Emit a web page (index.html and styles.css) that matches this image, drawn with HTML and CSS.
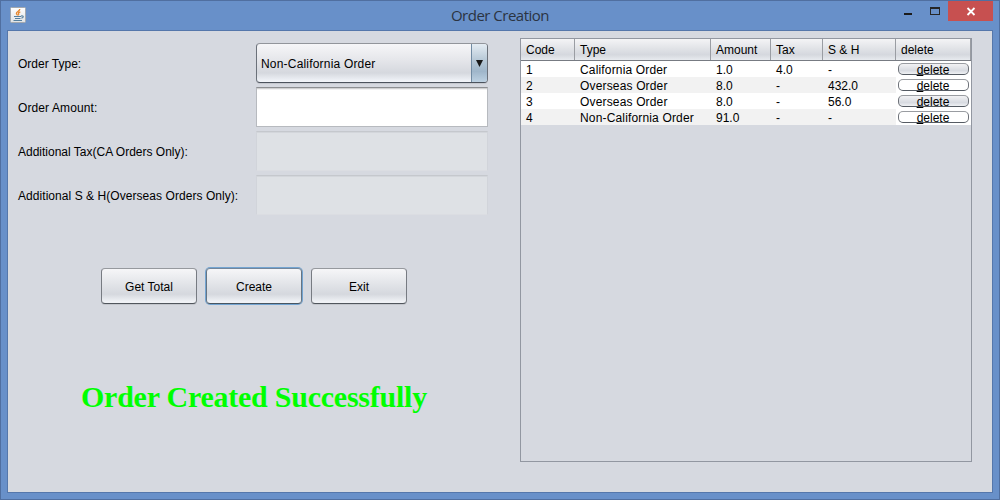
FILE: index.html
```html
<!DOCTYPE html>
<html lang="en">
<head>
<meta charset="utf-8">
<title>Order Creation</title>
<link rel="stylesheet" href="styles.css">
</head>
<body>
<div class="window">
  <header class="titlebar">
    <svg class="java" width="16" height="16" viewBox="0 0 16 16">
      <defs><linearGradient id="tile" x1="0" y1="0" x2="0" y2="1"><stop offset="0" stop-color="#fff"/><stop offset="1" stop-color="#dfe2e5"/></linearGradient></defs>
      <rect x=".5" y=".5" width="15" height="15" rx="1" fill="url(#tile)" stroke="#a3a8ae"/>
      <path d="M9.8 2C10 4 6.200 4.800 6.400 6.300C6.500 7.200 7.400 7.500 7.500 8.500M10.300 4.800C8.500 5.400 8 6 8.700 6.900C9 7.500 8.600 7.900 8.200 8.300" fill="none" stroke="#e8882e" stroke-width="1.300"/>
      <path d="M4 9.500H11M5 11.500H10.500M3.500 13.500H12M11 9C14.200 8.300 13.700 10.900 11.400 11.100" fill="none" stroke="#56809f" stroke-width="1.100"/>
    </svg>
    <h1 class="title">Order Creation</h1>
    <div class="controls">
      <svg class="glyphs" width="60" height="21" viewBox="0 0 60 21"><path d="M16 12h8v2h-8z" fill="#1b1b1b"/><path d="M42 6h10v8h-10zM43 8v5h8v-5z" fill="#262626" fill-rule="evenodd"/></svg>
      <div class="close"><svg width="45" height="20" viewBox="0 0 45 20"><path d="M19.500 7l7 7M26.500 7l-7 7" stroke="#fff" stroke-width="1.800"/></svg></div>
    </div>
  </header>
  <main class="content">
    <section class="left">
      <div class="form">
        <span class="label l1">Order Type:</span>
        <div class="combo"><span class="value">Non-California Order</span><span class="arrow"><svg width="7" height="7" viewBox="0 0 7 7"><path d="M0 0h7L3.500 7z" fill="#191919"/></svg></span></div>
        <span class="label l2">Order Amount:</span>
        <div class="field"></div>
        <span class="label l3">Additional Tax(CA Orders Only):</span>
        <div class="field disabled"></div>
        <span class="label l4">Additional S &amp; H(Overseas Orders Only):</span>
        <div class="field disabled"></div>
      </div>
      <div class="buttons">
        <div class="button">Get Total</div>
        <div class="button focused">Create</div>
        <div class="button">Exit</div>
      </div>
      <p class="message">Order Created Successfully</p>
    </section>
    <section class="table">
      <div class="row head"><span>Code</span><span>Type</span><span>Amount</span><span>Tax</span><span>S &amp; H</span><span>delete</span></div>
      <div class="row"><span>1</span><span class="type">California Order</span><span>1.0</span><span>4.0</span><span>-</span><div class="cell"><div class="delete shaded"><u>d</u>elete</div></div></div>
      <div class="row alt"><span>2</span><span class="type">Overseas Order</span><span>8.0</span><span>-</span><span>432.0</span><div class="cell"><div class="delete"><u>d</u>elete</div></div></div>
      <div class="row"><span>3</span><span class="type">Overseas Order</span><span>8.0</span><span>-</span><span>56.0</span><div class="cell"><div class="delete shaded"><u>d</u>elete</div></div></div>
      <div class="row alt"><span>4</span><span class="type">Non-California Order</span><span>91.0</span><span>-</span><span>-</span><div class="cell"><div class="delete"><u>d</u>elete</div></div></div>
    </section>
  </main>
</div>
</body>
</html>
```

FILE: styles.css
```css
* { box-sizing: border-box; }
body { margin: 0; font: 12px/16px "Liberation Sans", Arial, sans-serif; color: #000; }
.window { width: 1000px; height: 500px; background: #6890c9; border: 1px solid #506fa0; padding: 0 6px 6px; display: flex; flex-direction: column; }
.titlebar { height: 29px; flex: none; display: grid; grid-template-columns: 150px 1fr 150px; }
.java { margin: 6px 0 0 3px; }
.title { margin: 0; padding-top: 4px; text-align: center; font: 15px/21px "Open Sans", "Noto Sans", sans-serif; color: #2b3442; letter-spacing: -0.5px; }
.controls { display: flex; justify-content: flex-end; }
.close { width: 45px; height: 20px; background: #c75050; }
.content { flex: 1; background: #d6d9e0; border: 1px solid #5577ab; display: flex; padding: 7px 20px 30px 10px; }
.left { width: 502px; flex: none; padding-top: 5px; }
.form { display: grid; grid-template-columns: 238px 232px; row-gap: 4px; grid-auto-rows: 40px; align-items: center; }
.label { white-space: nowrap; padding-top: 2px; }
.l2 { letter-spacing: 0.1px; }
.l4 { letter-spacing: 0.055px; }
.combo { height: 40px; border: 1px solid; border-color: #92959b #6b717a #4c535d #6b717a; border-radius: 4px; background: linear-gradient(#f6f6f8, #e6e7eb 40%, #d5d8de 76%, #edf0f5 95%, #f4f6fa); display: flex; overflow: hidden; box-shadow: 0 1px 0 #c5c8ce; }
.value { flex: 1; padding: 12px 0 0 4px; letter-spacing: 0.19px; }
.arrow { width: 16px; border-left: 1px solid #718ba3; background: linear-gradient(#e4ecf3, #b9cad8 40%, #9fb6ca 72%, #bdd1e2); display: flex; align-items: center; justify-content: center; }
.field { height: 40px; background: #fff; border: 1px solid #b7babf; border-top-color: #8d8f92; box-shadow: inset 0 1px #d0d0d1, inset 0 2px #f1f1f2; }
.disabled { background: #dee1e5; border-color: #cfd2d8 #d1d4da #dbdde2; border-top-color: #c5c8cd; box-shadow: inset 0 1px #d3d6db; }
.buttons { display: flex; gap: 9px; padding: 53px 0 0 83px; }
.button { width: 96px; height: 36px; border: 1px solid; border-color: #96999e #777b82 #51565d #777b82; border-radius: 4px; text-align: center; line-height: 36px; background: linear-gradient(#f6f6f8, #e4e6ea 40%, #d5d8de 74%, #f0f2f6 96%); box-shadow: 0 1px #c3c6cc; }
.focused { border-color: #73869b #647484 #485663 #647484; box-shadow: 0 0 0 1px #73a4d1; }
.message { margin: 75px 0 0 63px; font: bold 30px/36px "Liberation Serif", "Times New Roman", serif; letter-spacing: -0.24px; color: #0f0; white-space: nowrap; }
.table { width: 452px; border: 1px solid #9297a1; }
.row { display: grid; grid-template-columns: 54px 136px 60px 52px 73px 75px; grid-template-rows: 100%; height: 16px; line-height: 18px; background: #fff; }
.row span { padding-left: 5px; white-space: nowrap; }
.row .type { letter-spacing: 0.16px; }
.row.alt { background: #f2f2f2; }
.row.head { height: 22px; line-height: 22px; border-bottom: 1px solid #777b82; background: linear-gradient(#f4f4f6, #e1e3e7 45%, #d5d8de 75%, #e8ebef); }
.head span { border-right: 1px solid #9a9da3; }
.row .cell { background: #fff; padding: 2px; }
.delete { width: 71px; height: 12px; border: 1px solid; border-color: #999ca1 #6d7178 #555b63 #6d7178; border-radius: 5px; background: #fff; line-height: 13px; text-align: center; padding-right: 1px; }
.delete u { text-underline-offset: 1px; }
.shaded { background: linear-gradient(#f2f2f4, #d8dbe1 65%, #eff1f4); }
```
